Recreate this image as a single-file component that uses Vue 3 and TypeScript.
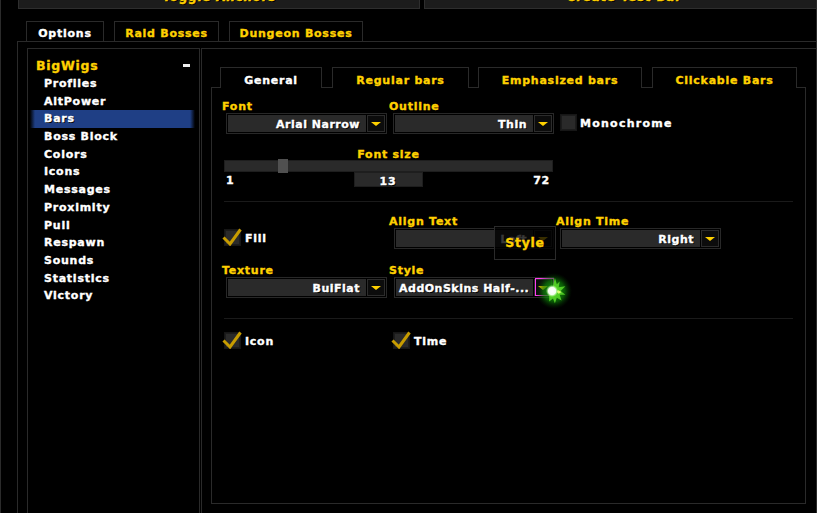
<script setup lang="ts">
import { ref } from 'vue'

const mainTabs = ['Options', 'Raid Bosses', 'Dungeon Bosses']
const subTabs = [
  { label: 'General', width: 102 },
  { label: 'Regular bars', width: 137 },
  { label: 'Emphasized bars', width: 164 },
  { label: 'Clickable Bars', width: 145 },
]
const treeItems = [
  'Profiles',
  'AltPower',
  'Bars',
  'Boss Block',
  'Colors',
  'Icons',
  'Messages',
  'Proximity',
  'Pull',
  'Respawn',
  'Sounds',
  'Statistics',
  'Victory',
]

const activeTab = ref('Options')
const activeSub = ref('General')
const activeItem = ref('Bars')
</script>

<template>
  <div class="app">
    <div class="top-row">
      <button class="top-btn anchors" type="button">Toggle Anchors</button>
      <button class="top-btn test" type="button">Create Test Bar</button>
    </div>

    <div class="tabs main-tabs">
      <button
        v-for="tab in mainTabs"
        :key="tab"
        class="tab main-tab"
        :class="{ active: tab === activeTab }"
        type="button"
        @click="activeTab = tab"
      >
        {{ tab }}
      </button>
    </div>

    <div class="outer-panel">
      <aside class="tree">
        <div class="tree-head">
          <span>BigWigs</span>
          <span class="collapse" />
        </div>
        <div
          v-for="item in treeItems"
          :key="item"
          class="tree-item"
          :class="{ selected: item === activeItem }"
          @click="activeItem = item"
        >
          {{ item }}
        </div>
      </aside>

      <section class="content">
        <div class="tabs sub-tabs">
          <button
            v-for="tab in subTabs"
            :key="tab.label"
            class="tab sub-tab"
            :class="{ active: tab.label === activeSub }"
            :style="{ width: tab.width + 'px' }"
            type="button"
            @click="activeSub = tab.label"
          >
            {{ tab.label }}
          </button>
        </div>

        <div class="inner-panel">
          <div class="grid first-row">
            <div class="field">
              <label>Font</label>
              <div class="select"><span class="value">Arial Narrow</span><span class="arrow"><i /></span></div>
            </div>
            <div class="field">
              <label>Outline</label>
              <div class="select"><span class="value">Thin</span><span class="arrow"><i /></span></div>
            </div>
            <div class="check mono">
              <span class="box" />
              <span class="check-label">Monochrome</span>
            </div>
          </div>

          <div class="slider-block">
            <div class="slider-title">Font size</div>
            <div class="track"><span class="thumb" /></div>
            <div class="slider-foot">
              <span>1</span>
              <span class="slider-value">13</span>
              <span class="slider-max">72</span>
            </div>
          </div>

          <hr class="rule rule-one" />

          <div class="grid">
            <div class="check fill">
              <span class="box">
                <svg class="tick" viewBox="0 0 20 18" aria-hidden="true">
                  <path d="M1.5 9.5 8 16 18.5 1.5" />
                </svg>
              </span>
              <span class="check-label">Fill</span>
            </div>
            <div class="field nudge">
              <label>Align Text</label>
              <div class="select"><span class="value">Left</span><span class="arrow"><i /></span></div>
            </div>
            <div class="field">
              <label>Align Time</label>
              <div class="select"><span class="value">Right</span><span class="arrow"><i /></span></div>
            </div>
          </div>

          <div class="grid texture-row">
            <div class="field">
              <label>Texture</label>
              <div class="select"><span class="value">BuiFlat</span><span class="arrow"><i /></span></div>
            </div>
            <div class="field nudge">
              <label>Style</label>
              <div class="select"><span class="value left">AddOnSkins Half-...</span><span class="arrow"><i /></span></div>
            </div>
          </div>

          <hr class="rule rule-two" />

          <div class="grid">
            <div class="check">
              <span class="box">
                <svg class="tick" viewBox="0 0 20 18" aria-hidden="true">
                  <path d="M1.5 9.5 8 16 18.5 1.5" />
                </svg>
              </span>
              <span class="check-label">Icon</span>
            </div>
            <div class="check time">
              <span class="box">
                <svg class="tick" viewBox="0 0 20 18" aria-hidden="true">
                  <path d="M1.5 9.5 8 16 18.5 1.5" />
                </svg>
              </span>
              <span class="check-label">Time</span>
            </div>
          </div>
        </div>
      </section>
    </div>

    <!-- Tooltip, highlight and cursor glow sit over the form -->
    <div class="tooltip">Style</div>
    <span class="highlight" />
    <svg class="glow" viewBox="0 0 40 40" aria-hidden="true">
      <defs>
        <radialGradient id="halo">
          <stop offset="0" stop-color="#25b818" />
          <stop offset="0.6" stop-color="#0c7a07" stop-opacity="0.7" />
          <stop offset="1" stop-color="#053003" stop-opacity="0" />
        </radialGradient>
        <radialGradient id="core">
          <stop offset="0" stop-color="#fff" />
          <stop offset="0.6" stop-color="#f4fff0" />
          <stop offset="1" stop-color="#a6ff80" stop-opacity="0" />
        </radialGradient>
        <filter id="soft"><feGaussianBlur stdDeviation="0.8" /></filter>
      </defs>
      <circle cx="21" cy="20" r="19" fill="url(#halo)" />
      <path
        d="M22 6 24 13 27 10 26 16 33 15 28 20 33 24 27 24 29 30 24 27 22 33 20 28 16 31 16 26 15 20 17 17 20 15Z"
        fill="#5cdc2a"
        opacity="0.85"
        filter="url(#soft)"
      />
      <path d="M25 19 29 21 26 23 24 21Z" fill="#d8ff70" />
      <circle cx="19" cy="20" r="6.5" fill="url(#core)" />
    </svg>
  </div>
</template>

<style>
html,
body {
  margin: 0;
  background: #000;
}
</style>

<style scoped>
.app {
  position: relative;
  width: 817px;
  height: 513px;
  box-sizing: border-box;
  overflow: hidden;
  background: #000;
  border-left: 1px solid #2b2b2b;
  border-right: 1px solid #2b2b2b;
  color: #fff;
  font-family: "DejaVu Sans", "Liberation Sans", sans-serif;
  font-size: 11px;
  font-weight: 700;
  letter-spacing: 0.75px;
  -webkit-text-stroke: 0.35px currentColor;
  text-shadow: 1px 1px 0 #000;
}

button {
  font: inherit;
  letter-spacing: inherit;
  text-shadow: inherit;
  cursor: pointer;
}

.top-row {
  display: flex;
  gap: 4px;
  height: 9px;
  margin-left: 17px;
  align-items: flex-end;
}

.top-btn {
  flex: none;
  height: 24px;
  box-sizing: border-box;
  padding: 0;
  background: #1c1c1c;
  border: 1px solid #2e2e2e;
  color: #ffd100;
  font-size: 12px;
  line-height: 16px;
}

.anchors {
  width: 402px;
}

.test {
  width: 400px;
}

.tabs {
  display: flex;
}

.main-tabs {
  gap: 10px;
  margin: 12px 0 0 25px;
}

.tab {
  box-sizing: border-box;
  height: 21px;
  padding: 4px 0 0;
  background: #000;
  border: 1px solid #2a2a2a;
  border-bottom: none;
  color: #ffd100;
}

.tab.active {
  color: #fff;
}

.main-tab {
  height: 20px;
}

.main-tab:nth-child(1) {
  width: 78px;
}

.main-tab:nth-child(2) {
  width: 105px;
}

.main-tab:nth-child(3) {
  width: 134px;
}

.outer-panel {
  display: flex;
  gap: 1px;
  height: 472px;
  box-sizing: border-box;
  margin: 0 0 0 16px;
  padding: 6px 0 0 9px;
  border-top: 1px solid #2a2a2a;
  border-left: 1px solid #2a2a2a;
}

.tree {
  width: 173px;
  flex: none;
  box-sizing: border-box;
  padding: 8px 4px 0 2px;
  border: 1px solid #2a2a2a;
  border-bottom: none;
}

.tree-head {
  display: flex;
  align-items: center;
  justify-content: space-between;
  height: 18px;
  box-sizing: border-box;
  padding: 0 5px 2px 6px;
  color: #ffd100;
  font-size: 12.5px;
}

.collapse {
  width: 7px;
  height: 3px;
  background: #eee;
}

.tree-item {
  height: 17.7px;
  line-height: 17.7px;
  padding-left: 14px;
  cursor: pointer;
}

.tree-item.selected {
  background: linear-gradient(90deg, #000 0, #1f3f85 5px, #1f3f85 calc(100% - 5px), #000 100%);
}

.content {
  flex: 1;
  min-width: 0;
  box-sizing: border-box;
  padding: 18px 0 0 9px;
  border-top: 1px solid #2a2a2a;
  border-left: 1px solid #2a2a2a;
}

.sub-tabs {
  gap: 10px;
  margin-left: 9px;
}

.sub-tab:nth-child(3) {
  margin-left: -1px;
}

.inner-panel {
  width: 595px;
  height: 417px;
  box-sizing: border-box;
  margin-top: -1px;
  padding: 11px 0 0 10px;
  border: 1px solid #2a2a2a;
}

.grid {
  display: grid;
  grid-template-columns: 167px 167px 167px;
}

.field label {
  display: block;
  height: 14px;
  line-height: 16px;
  color: #ffd100;
}

.select {
  display: flex;
  width: 161px;
  height: 21px;
  box-sizing: border-box;
  margin-left: 4px;
  border: 1px solid #282828;
}

.nudge .select {
  width: 160px;
  margin-left: 5px;
}

.value {
  flex: 1;
  margin: 1px 0 1px 1px;
  padding: 0 6px;
  min-width: 0;
  overflow: hidden;
  white-space: nowrap;
  line-height: 20px;
  letter-spacing: 0.5px;
  text-align: right;
  background: #2a2a2a;
}

.value.left {
  padding: 0 0 0 3px;
  text-align: left;
}

.arrow {
  flex: none;
  display: flex;
  align-items: center;
  justify-content: center;
  width: 18px;
  margin: 1px;
  box-sizing: border-box;
  border: 1px solid #2c2c2c;
  background: #0c0c0c;
}

.arrow i {
  width: 0;
  height: 0;
  border-style: solid;
  border-width: 4px 5px 0;
  border-color: #ffd100 transparent transparent;
}

.check {
  display: flex;
  align-items: center;
  gap: 5px;
  height: 20px;
}

.check-label {
  margin-top: 2px;
}

.box {
  position: relative;
  flex: none;
  width: 15px;
  height: 15px;
  box-sizing: border-box;
  margin-left: 3px;
  background: #2a2a2a;
  border: 1px solid #1c1c1c;
  outline: 1px solid #161616;
}

.tick {
  position: absolute;
  left: -4px;
  top: -3px;
  width: 20px;
  height: 18px;
  fill: none;
  stroke: #c79c00;
  stroke-width: 3;
}

.mono {
  align-self: end;
  margin: 0 0 2px 2px;
  gap: 4px;
  letter-spacing: 1.25px;
}

.slider-block {
  width: 329px;
  margin: 13px 0 0 2px;
}

.slider-title {
  height: 13px;
  line-height: 15px;
  color: #ffd100;
  text-align: center;
}

.track {
  position: relative;
  height: 12px;
  box-sizing: border-box;
  background: #2a2a2a;
  border: 1px solid #1e1e1e;
}

.thumb {
  position: absolute;
  left: 53px;
  top: -2px;
  width: 10px;
  height: 14px;
  background: #505050;
}

.slider-foot {
  display: grid;
  grid-template-columns: 1fr 69px 1fr;
  align-items: start;
  height: 16px;
  padding: 0 3px 0 2px;
  line-height: 17px;
}

.slider-max {
  text-align: right;
}

.slider-value {
  height: 15px;
  box-sizing: border-box;
  line-height: 17px;
  text-align: center;
  background: #2a2a2a;
  border: 1px solid #1e1e1e;
}

.rule {
  height: 1px;
  margin: 0 0 0 2px;
  width: 569px;
  border: none;
  background: #1a1a1a;
}

.rule-one {
  margin-top: 13px;
  margin-bottom: 12px;
}

.rule-two {
  margin-top: 20px;
  margin-bottom: 11px;
}

.fill {
  align-self: end;
  margin-bottom: 2px;
}

.texture-row {
  margin-top: 14px;
}

.time {
  padding-left: 2px;
}

.tooltip {
  position: absolute;
  left: 493px;
  top: 226px;
  width: 62px;
  height: 34px;
  box-sizing: border-box;
  padding-top: 8px;
  text-align: center;
  background: rgba(0, 0, 0, 0.78);
  border: 1px solid #2a2a2a;
  color: #ffd100;
  font-size: 12.5px;
}

.highlight {
  position: absolute;
  left: 534px;
  top: 278px;
  width: 19px;
  height: 18px;
  box-sizing: border-box;
  border: 1px solid #ff3cf0;
}

.glow {
  position: absolute;
  left: 533px;
  top: 272px;
  width: 38px;
  height: 38px;
}
</style>
